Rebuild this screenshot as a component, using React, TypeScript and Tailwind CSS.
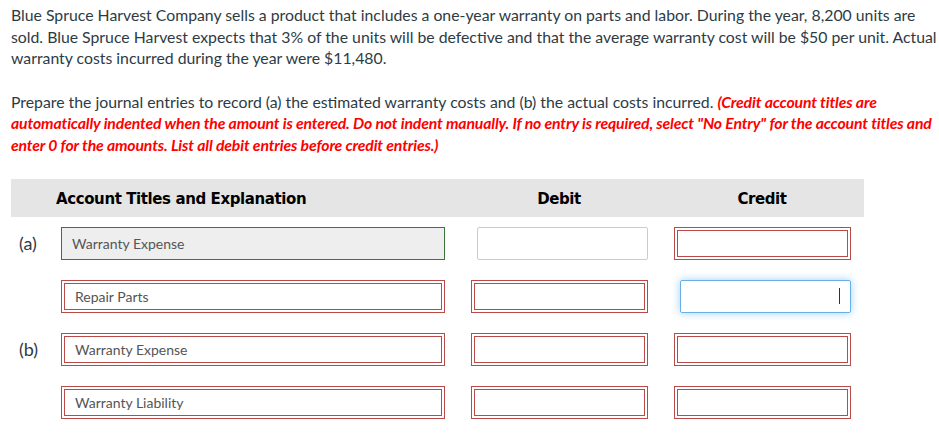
import React from "react";

const lato = { fontFamily: "Lato, 'Open Sans', sans-serif" };

function RedBox({ text, className = "" }: { text?: string; className?: string }) {
  return (
    <div className={`h-[33px] border border-[#b94a48] p-[2px] ${className}`}>
      <div className="h-full border border-[#b94a48] bg-white flex items-center pl-[10px] text-[14px] text-[#555]">
        {text}
      </div>
    </div>
  );
}

export default function App() {
  return (
    <div className="w-[939px] h-[442px] bg-white text-[#2d3b45] overflow-hidden" style={lato}>
      <div className="pl-[11px] pt-[4px] text-[15.8px] leading-[21.6px]">
        <p className="w-[928px]">
          Blue Spruce Harvest Company sells a product that includes a one-year warranty on parts and labor. During the year, 8,200 units are sold. Blue Spruce Harvest expects that 3% of the units will be defective and that the average warranty cost will be $50 per unit. Actual warranty costs incurred during the year were $11,480.
        </p>
        <p className="mt-[22px] w-[928px]">
          Prepare the journal entries to record (a) the estimated warranty costs and (b) the actual costs incurred.{" "}
          <span className="text-[#ff0000] font-bold italic tracking-[-0.15px]">
            (Credit account titles are automatically indented when the amount is entered. Do not indent manually. If no entry is required, select "No Entry" for the account titles and enter 0 for the amounts. List all debit entries before credit entries.)
          </span>
        </p>
      </div>

      {/* Journal table */}
      <div className="ml-[11px] mt-[23px] w-[853px]">
        <div className="h-[38px] pt-[3px] bg-[#e5e5e5] flex items-center text-[15px] font-bold text-black tracking-[-0.4px]" style={{ fontFamily: "'DejaVu Sans', Verdana, sans-serif" }}>
          <div className="w-[434px] pl-[45px]">Account Titles and Explanation</div>
          <div className="w-[228px] text-center">Debit</div>
          <div className="w-[178px] text-center">Credit</div>
        </div>

        <div className="flex flex-col gap-[20px] mt-[10px]">
          {/* (a) row 1 */}
          <div className="flex items-center">
            <div className="w-[50px] pl-[8px] text-[18px]">(a)</div>
            <div className="w-[384px] h-[33px] border border-[#3c763d] bg-[#eeeeee] flex items-center pl-[10px] text-[14px] text-[#555]">
              Warranty Expense
            </div>
            <div className="ml-[32px] w-[171px] h-[33px] border border-[#cccccc] rounded-[2px] bg-white" />
            <div className="ml-[26px] w-[177px]">
              <RedBox />
            </div>
          </div>

          {/* (a) row 2 */}
          <div className="flex items-center">
            <div className="w-[50px]" />
            <RedBox text="Repair Parts" className="w-[384px]" />
            <RedBox className="ml-[26px] w-[177px]" />
            <div className="ml-[32px] w-[171px] h-[33px] border border-[#66afe9] rounded-[2px] bg-white shadow-[0_0_8px_rgba(102,175,233,0.6)] flex items-center justify-end pr-[10px]">
              <div className="w-px h-[16px] bg-[#333]" />
            </div>
          </div>

          {/* (b) row 1 */}
          <div className="flex items-center">
            <div className="w-[50px] pl-[8px] text-[18px]">(b)</div>
            <RedBox text="Warranty Expense" className="w-[384px]" />
            <RedBox className="ml-[26px] w-[177px]" />
            <RedBox className="ml-[26px] w-[177px]" />
          </div>

          {/* (b) row 2 */}
          <div className="flex items-center">
            <div className="w-[50px]" />
            <RedBox text="Warranty Liability" className="w-[384px]" />
            <RedBox className="ml-[26px] w-[177px]" />
            <RedBox className="ml-[26px] w-[177px]" />
          </div>
        </div>
      </div>
    </div>
  );
}
